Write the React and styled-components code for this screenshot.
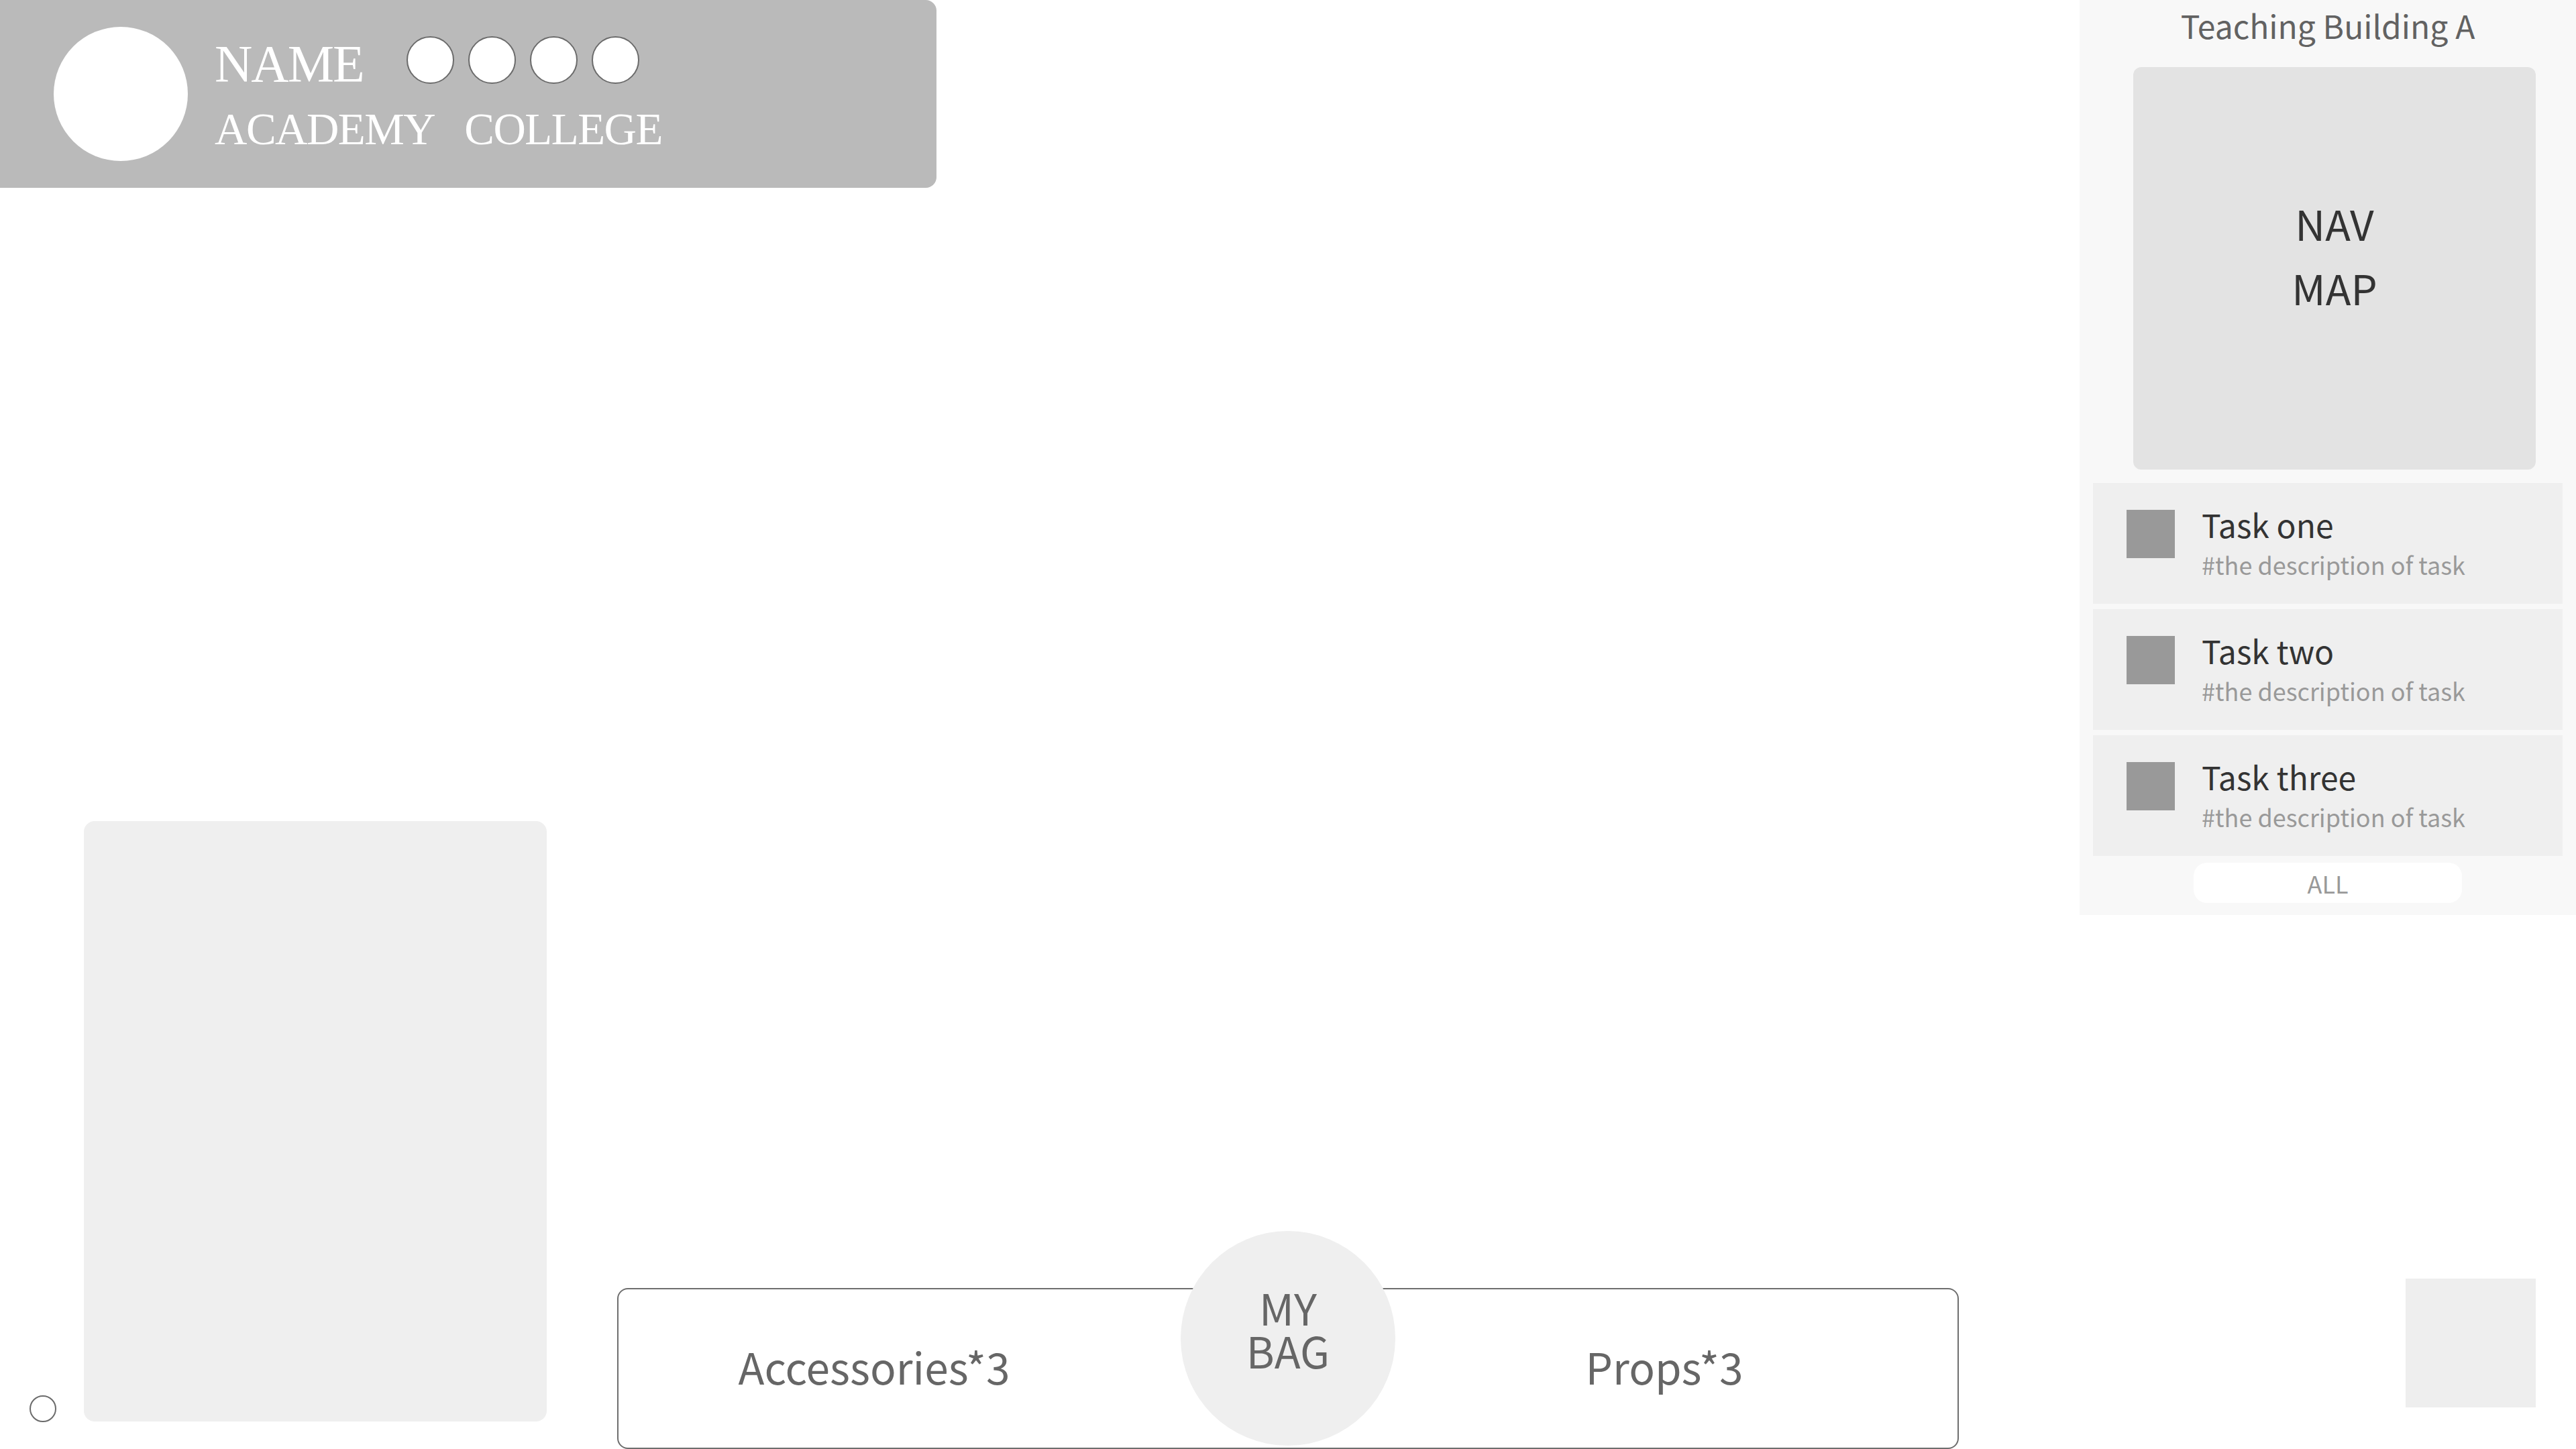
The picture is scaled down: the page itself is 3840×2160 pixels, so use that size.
import React from "react";
import styled, { createGlobalStyle } from "styled-components";

const Global = createGlobalStyle`
  html, body { margin: 0; padding: 0; background: #fff; }
  #root { width: 3840px; height: 2160px; }
  * { box-sizing: border-box; }
`;

const SANS = `"Noto Sans CJK SC", "Source Sans Pro", "Noto Sans", sans-serif`;
const SERIF = `"Liberation Serif", "Times New Roman", serif`;

const Page = styled.div`
  width: 3840px;
  height: 2160px;
  display: grid;
  grid-template-columns: 920px 2000px 920px;
  grid-template-rows: auto 1fr;
  background: #fff;
  overflow: hidden;
  font-family: ${SANS};
`;

/* ---------- Header ---------- */
const Header = styled.header`
  grid-column: 1 / 3;
  grid-row: 1;
  width: 1396px;
  height: 280px;
  background: #bababa;
  border-radius: 0 16px 16px 0;
  display: flex;
  align-items: center;
  padding-left: 80px;
  gap: 40px;
`;

const Avatar = styled.div`
  width: 200px;
  height: 200px;
  border-radius: 50%;
  background: #fff;
  flex-shrink: 0;
`;

const IdBlock = styled.div`
  display: flex;
  flex-direction: column;
  margin-top: 6px;
`;

const NameRow = styled.div`
  display: flex;
  align-items: flex-start;
`;

const NameText = styled.span`
  font-family: ${SERIF};
  font-size: 78px;
  line-height: 71px;
  letter-spacing: -2px;
  color: #fff;
  margin-top: 5px;
`;

const Badges = styled.div`
  display: flex;
  gap: 21px;
  margin-left: 64px;
`;

const Badge = styled.div`
  width: 71px;
  height: 71px;
  border-radius: 50%;
  border: 2px solid #6b6b6b;
  background: #fff;
`;

const SchoolRow = styled.div`
  display: flex;
  gap: 44px;
  margin-top: 22px;
  font-family: ${SERIF};
  font-size: 67px;
  line-height: 80px;
  letter-spacing: -1.5px;
  color: #fff;
`;

/* ---------- Left column ---------- */
const LeftDock = styled.div`
  grid-column: 1;
  grid-row: 2;
  display: flex;
  align-items: flex-end;
  padding: 0 0 40px 44px;
`;

const Dot = styled.div`
  width: 40px;
  height: 40px;
  border-radius: 50%;
  border: 2px solid #6b6b6b;
  background: #fff;
  flex-shrink: 0;
`;

const Card = styled.div`
  width: 690px;
  height: 895px;
  margin-left: 41px;
  margin-bottom: 1px;
  background: #efefef;
  border-radius: 16px;
`;

/* ---------- Bag ---------- */
const BagDock = styled.div`
  grid-column: 2;
  grid-row: 2;
  align-self: end;
  display: grid;
  height: 325px;
`;

const BagBar = styled.div`
  grid-area: 1 / 1;
  align-self: end;
  height: 240px;
  border: 2px solid #6e6e6e;
  border-radius: 16px;
  display: grid;
  grid-template-columns: 1fr 320px 1fr;
  align-items: center;
`;

const BagLabel = styled.div`
  text-align: center;
  font-size: 64px;
  line-height: 1;
  color: #666;
  padding-right: ${(p) => p.$pr}px;
  padding-bottom: 8px;
`;

const BagButton = styled.div`
  grid-area: 1 / 1;
  justify-self: center;
  align-self: start;
  width: 320px;
  height: 320px;
  border-radius: 50%;
  background: #efefef;
  display: flex;
  align-items: center;
  justify-content: center;
  padding-bottom: 31px;
  font-size: 64px;
  line-height: 64px;
  color: #666;
  text-align: center;
`;

/* ---------- Right column ---------- */
const RightDock = styled.div`
  grid-column: 3;
  grid-row: 1 / 3;
  display: flex;
  flex-direction: column;
  justify-content: space-between;
  align-items: flex-end;
`;

const Panel = styled.aside`
  width: 740px;
  background: #f8f8f8;
  display: flex;
  flex-direction: column;
  align-items: center;
  padding-bottom: 18px;
`;

const PanelTitle = styled.div`
  align-self: stretch;
  text-align: center;
  font-size: 48px;
  line-height: 74px;
  color: #626262;
`;

const MapBox = styled.div`
  width: 600px;
  height: 600px;
  margin-top: 26px;
  margin-left: 20px;
  background: #e3e3e3;
  border-radius: 12px;
  display: flex;
  align-items: center;
  justify-content: center;
  padding-bottom: 40px;
  font-size: 62px;
  line-height: 96px;
  color: #333;
  text-align: center;
`;

const TaskList = styled.div`
  align-self: stretch;
  margin: 20px 20px 0;
  display: flex;
  flex-direction: column;
  gap: 8px;
`;

const TaskRow = styled.div`
  height: 180px;
  background: #efefef;
  display: flex;
  align-items: flex-start;
  padding-left: 50px;
`;

const TaskIcon = styled.div`
  width: 72px;
  height: 72px;
  background: #999;
  margin-top: 40px;
  flex-shrink: 0;
`;

const TaskText = styled.div`
  display: flex;
  flex-direction: column;
  margin-left: 40px;
  margin-top: 31px;
`;

const TaskTitle = styled.div`
  font-size: 48px;
  line-height: 60px;
  color: #333;
`;

const TaskDesc = styled.div`
  font-size: 36px;
  line-height: 50px;
  color: #999;
  margin-top: 5px;
`;

const AllButton = styled.button`
  width: 400px;
  height: 60px;
  margin-top: 10px;
  border: none;
  border-radius: 20px;
  background: #fff;
  font-family: ${SANS};
  font-size: 36px;
  line-height: 60px;
  color: #999;
  padding: 0;
  text-align: center;
`;

const CornerTile = styled.div`
  width: 194px;
  height: 192px;
  background: #eee;
  margin: 0 60px 62px 0;
`;

const tasks = [
  { title: "Task one", desc: "#the description of task" },
  { title: "Task two", desc: "#the description of task" },
  { title: "Task three", desc: "#the description of task" },
];

export default function App() {
  return (
    <>
      <Global />
      <Page>
        <Header>
          <Avatar />
          <IdBlock>
            <NameRow>
              <NameText>NAME</NameText>
              <Badges>
                <Badge />
                <Badge />
                <Badge />
                <Badge />
              </Badges>
            </NameRow>
            <SchoolRow>
              <span>ACADEMY</span>
              <span>COLLEGE</span>
            </SchoolRow>
          </IdBlock>
        </Header>

        <LeftDock>
          <Dot />
          <Card />
        </LeftDock>

        <BagDock>
          <BagBar>
            <BagLabel $pr={76}>Accessories*3</BagLabel>
            <div />
            <BagLabel $pr={36}>Props*3</BagLabel>
          </BagBar>
          <BagButton>
            MY
            <br />
            BAG
          </BagButton>
        </BagDock>

        <RightDock>
          <Panel>
            <PanelTitle>Teaching Building A</PanelTitle>
            <MapBox>
              NAV
              <br />
              MAP
            </MapBox>
            <TaskList>
              {tasks.map((t) => (
                <TaskRow key={t.title}>
                  <TaskIcon />
                  <TaskText>
                    <TaskTitle>{t.title}</TaskTitle>
                    <TaskDesc>{t.desc}</TaskDesc>
                  </TaskText>
                </TaskRow>
              ))}
            </TaskList>
            <AllButton>ALL</AllButton>
          </Panel>
          <CornerTile />
        </RightDock>
      </Page>
    </>
  );
}
